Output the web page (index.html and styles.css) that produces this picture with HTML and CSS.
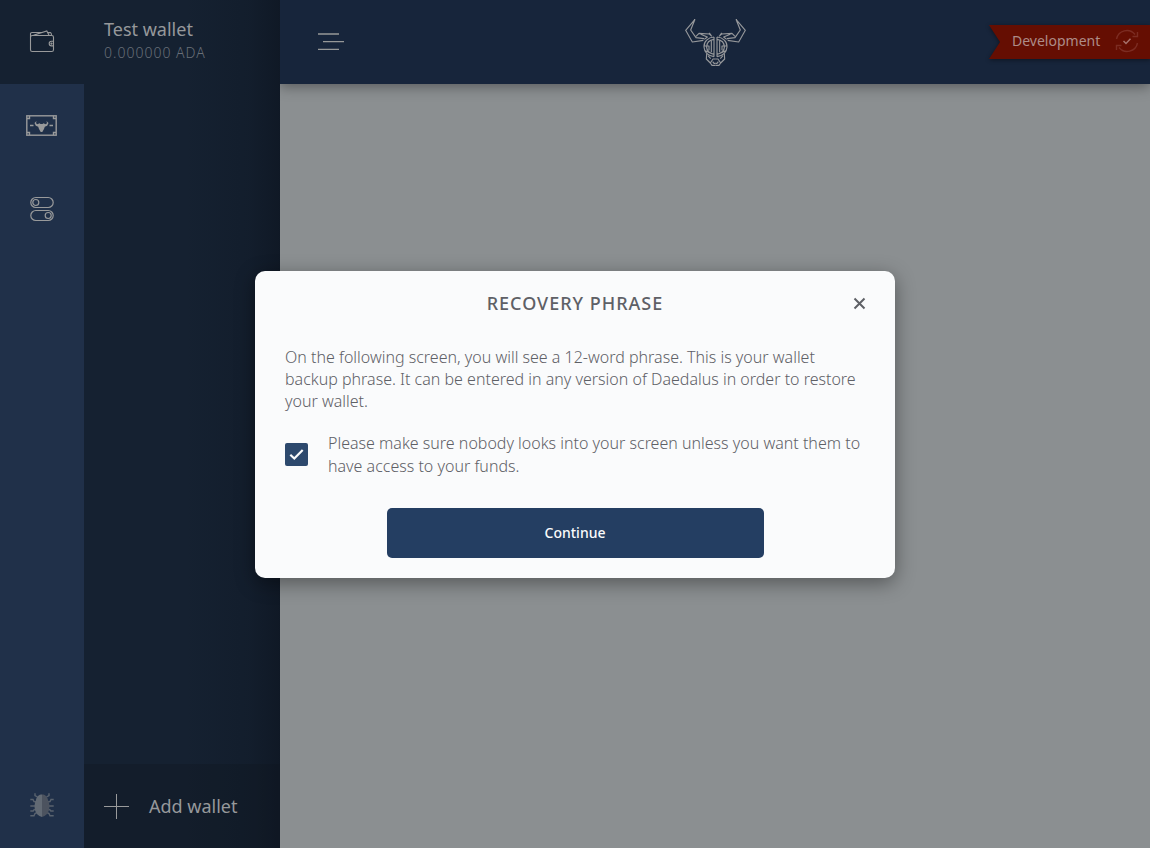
FILE: index.html
```html
<!DOCTYPE html>
<html lang="en">
<head>
<meta charset="utf-8">
<title>Daedalus</title>
<link rel="stylesheet" href="styles.css">
</head>
<body>
<div class="app">
  <aside class="sidebar">
    <nav class="categories">
      <div class="category category-active">
        <svg class="icon-wallet" viewBox="0 0 26 24"><rect x="1.5" y="5.5" width="23" height="16" rx="1.8"/><path d="M1.500 7.500V3.500Q1.500 2.500 3 2.500H13.500M4.500 5.300L17.800 1L20 5.300M19 2.600H21.500Q22.500 2.700 22.500 5.300M24.500 11.300H22.500A2.300 2.300 0 0 0 22.500 15.900H24.500"/><circle cx="22.500" cy="13.600" r=".6"/></svg>
      </div>
      <div class="category">
        <svg class="icon-note" viewBox="0 0 31 21"><rect x=".8" y=".8" width="29.400" height="19.400"/><path d="M1 3.500H3.500V1M27.500 1V3.500H30M1 17.500H3.500V20M27.500 20V17.500H30M4 10.500H7.500M23.500 10.500H27"/><path class="solid" d="M10.500 6L8.500 8L9.800 10.800L12.200 11.800L13 14L14.700 17H16.300L18 14L18.800 11.800L21.200 10.800L22.500 8L20.500 6L21 8.300L19.500 9.200L17.500 8.300L16.500 8.900H14.500L13.500 8.300L11.500 9.200L10 8.300Z"/></svg>
      </div>
      <div class="category">
        <svg class="icon-toggles" viewBox="0 0 24 26"><rect x=".8" y="1.500" width="22.400" height="10" rx="5"/><circle cx="5.800" cy="6.500" r="3"/><rect x=".8" y="14.500" width="22.400" height="10" rx="5"/><circle cx="18.200" cy="19.500" r="3"/></svg>
      </div>
      <div class="category category-bottom">
        <svg class="icon-bug" viewBox="0 0 24 24"><path class="legs" d="M7.500 4L5 2.500V.3M16.500 4L19 2.500V.3M7 9L4 8.500L3 6.500H.3M17 9L20 8.500L21 6.500H23.700M6 13H.3M18 13H23.700M7 16L4 16.800L3.200 18H.3M17 16L20 16.800L20.800 18H23.700M8 19L5 20.500L4 22.700H.3M16 19L19 20.500L20 22.700H23.700"/><path class="shell" d="M12 1.500C9 1.500 6.500 3.500 6 7C3 13 4.500 22.500 12 24Z"/><path class="shell-dark" d="M12 1.500C15 1.500 17.500 3.500 18 7C21 13 19.500 22.500 12 24Z"/></svg>
      </div>
    </nav>
    <section class="wallets">
      <div class="wallet">
        <div class="wallet-name">Test wallet</div>
        <div class="wallet-amount">0.000000 ADA</div>
      </div>
      <div class="add-wallet">
        <svg class="icon-plus" viewBox="0 0 25 25"><path d="M0 12.500H25M12.500 0V25"/></svg>
        <span>Add wallet</span>
      </div>
    </section>
  </aside>
  <main class="main">
    <header class="topbar">
      <svg class="icon-menu" viewBox="0 0 26 18"><path d="M0 1H21M5 8.700H26M0 16.300H21"/></svg>
      <svg class="logo" viewBox="0 0 270 210">
        <defs>
          <g id="half">
            <path d="M75 43L47 76L67 111L100 106M75 43L62 75L78 98L102 101M78 94L87 85L118 87L126 94M92 88L112 96L103 103M117 84L123 90"/>
            <path d="M132 96C114 97 101 110 102 126C103 141 114 152 132 155M132 103C118 105 110 114 110 126C110 137 118 145 132 148M132 96V155M124 106V142M103 123H117V136M110 130V123M106 137L119 143"/>
            <path d="M110 147L109 162L121 174L129 162H136.500M114 152L122 161M121 174L126 181H136.500M128 170L132 175H136.500"/>
          </g>
        </defs>
        <use href="#half"/>
        <use href="#half" transform="translate(273 0) scale(-1 1)"/>
      </svg>
      <div class="ribbon">
        <svg class="ribbon-shape" viewBox="0 0 161 34"><path d="M0 0H161V34H0L11 17Z"/></svg>
        <span class="ribbon-label">Development</span>
        <svg class="icon-sync" viewBox="0 0 24 24"><path d="M1.500 10A10.500 10.500 0 0 1 20 5.500M22.500 3V7.500H17.500M22.500 14A10.500 10.500 0 0 1 4 18.500M1.500 21V16.500H6.500"/><path class="tick" d="M8.500 12L11 14.500L15.500 9.800"/></svg>
      </div>
    </header>
  </main>
  <div class="overlay">
    <section class="dialog">
      <div class="dialog-head">
        <h1>RECOVERY PHRASE</h1>
        <svg class="icon-close" viewBox="0 0 12 12"><path d="M1.500 1.500L11.500 11.500M11.500 1.500L1.500 11.500"/></svg>
      </div>
      <p class="instructions">On the following screen, you will see a 12-word phrase. This is your wallet backup phrase. It can be entered in any version of Daedalus in order to restore your wallet.</p>
      <div class="confirm">
        <div class="checkbox"><svg viewBox="0 0 23 23"><path d="M5.300 11.700L9.300 15.500L17.700 7"/></svg></div>
        <p class="confirm-text">Please make sure nobody looks into your screen unless you want them to have access to your funds.</p>
      </div>
      <button class="continue">Continue</button>
    </section>
  </div>
</div>
</body>
</html>
```
FILE: styles.css
```css
* { box-sizing: border-box; }
body { margin: 0; font-family: "Noto Sans", "Open Sans", sans-serif; }
svg { display: block; fill: none; flex: none; overflow: visible; }
h1, p { margin: 0; }
.app { position: relative; display: flex; width: 1150px; height: 848px; overflow: hidden; }
.sidebar { display: flex; width: 280px; }
.categories { display: flex; flex-direction: column; width: 84px; background: #203049; }
.category { display: flex; align-items: center; justify-content: center; height: 84px; padding-bottom: 2px; stroke: #999a9b; }
.category-active { padding-bottom: 0; background: #152131; }
.category-bottom { margin-top: auto; }
.icon-wallet { width: 26px; height: 24px; stroke-width: 1.1; }
.icon-note { width: 31px; height: 21px; margin-right: 1px; stroke-width: 1.4; }
.solid { fill: #999a9b; stroke: none; }
.icon-toggles { width: 24px; height: 26px; stroke-width: 1.2; }
.icon-bug { width: 24px; height: 24px; }
.legs { stroke: #59626e; stroke-width: 1.4; }
.shell { fill: #626a74; stroke: none; }
.shell-dark { fill: #4c535f; stroke: none; }
.wallets { display: flex; flex-direction: column; justify-content: space-between; width: 196px; background: linear-gradient(to right, transparent 100px, rgba(10, 16, 26, .2) 165px, rgba(10, 16, 26, .5)), #152131; }
.wallet { height: 84px; padding: 17px 20px; }
.wallet-name { font-size: 18px; line-height: 25px; color: #96989b; }
.wallet-amount { margin-top: 2px; font-size: 14px; line-height: 18px; font-weight: 300; letter-spacing: 1px; color: #686f78; }
.add-wallet { display: flex; align-items: center; gap: 20px; height: 84px; padding-left: 20px; background: rgba(14, 21, 32, .32); font-size: 18px; color: #96989b; }
.icon-plus { width: 25px; height: 25px; stroke: #999a9b; stroke-width: 1; }
.main { flex: 1; overflow: hidden; background: #8b8f91; }
.topbar { display: flex; align-items: center; justify-content: space-between; height: 84px; padding-left: 38px; background: #17253b; box-shadow: 0 3px 12px rgba(0, 0, 0, .36); }
.icon-menu { width: 26px; height: 18px; stroke: #969898; stroke-width: 1.3; }
.logo { width: 90px; height: 70px; margin: 0 0 4px 97px; stroke: #96989b; stroke-width: 3.4; stroke-linejoin: round; }
.ribbon { position: relative; display: flex; align-items: center; width: 161px; height: 34px; padding: 0 0 3px 23px; font-size: 14px; color: #ad8c88; }
.ribbon-shape { position: absolute; inset: 0; width: 161px; height: 34px; fill: #650e02; filter: drop-shadow(0 1px 2px rgba(0, 0, 0, .45)); }
.ribbon-label { position: relative; width: 88px; }
.icon-sync { position: relative; width: 24px; height: 24px; margin: 1px 0 0 15px; stroke: #7c2c22; stroke-width: 1.4; }
.tick { stroke: #a5716b; stroke-width: 1.5; }
.overlay { position: absolute; inset: 0; display: flex; align-items: center; justify-content: center; }
.dialog { width: 640px; height: 307px; padding: 20px 30px; border-radius: 10px; background: #fafbfc; box-shadow: 0 5px 20px rgba(0, 0, 0, .4); color: #5e6066; }
.dialog-head { display: grid; grid-template-columns: 12px 1fr 12px; align-items: center; height: 25px; }
h1 { grid-column: 2; text-align: center; font-size: 18px; line-height: 25px; font-weight: 500; letter-spacing: 1px; }
.icon-close { width: 12px; height: 12px; stroke: #5e6066; stroke-width: 2; }
.instructions { margin-top: 30px; font-size: 16px; line-height: 22px; font-weight: 300; }
.confirm { display: flex; align-items: center; gap: 20px; margin-top: 20px; }
.checkbox { flex: none; width: 23px; height: 23px; border-radius: 2px; background: #2d496d; }
.checkbox svg { width: 23px; height: 23px; stroke: #fafbfc; stroke-width: 2.2; }
.confirm-text { font-size: 16px; line-height: 23px; font-weight: 300; }
.continue { display: block; width: 377px; height: 50px; margin: 30px auto 0; padding: 0; border: 0; border-radius: 5px; background: #243e62; color: #fafbfc; font: 500 14px "Noto Sans", sans-serif; }
```
